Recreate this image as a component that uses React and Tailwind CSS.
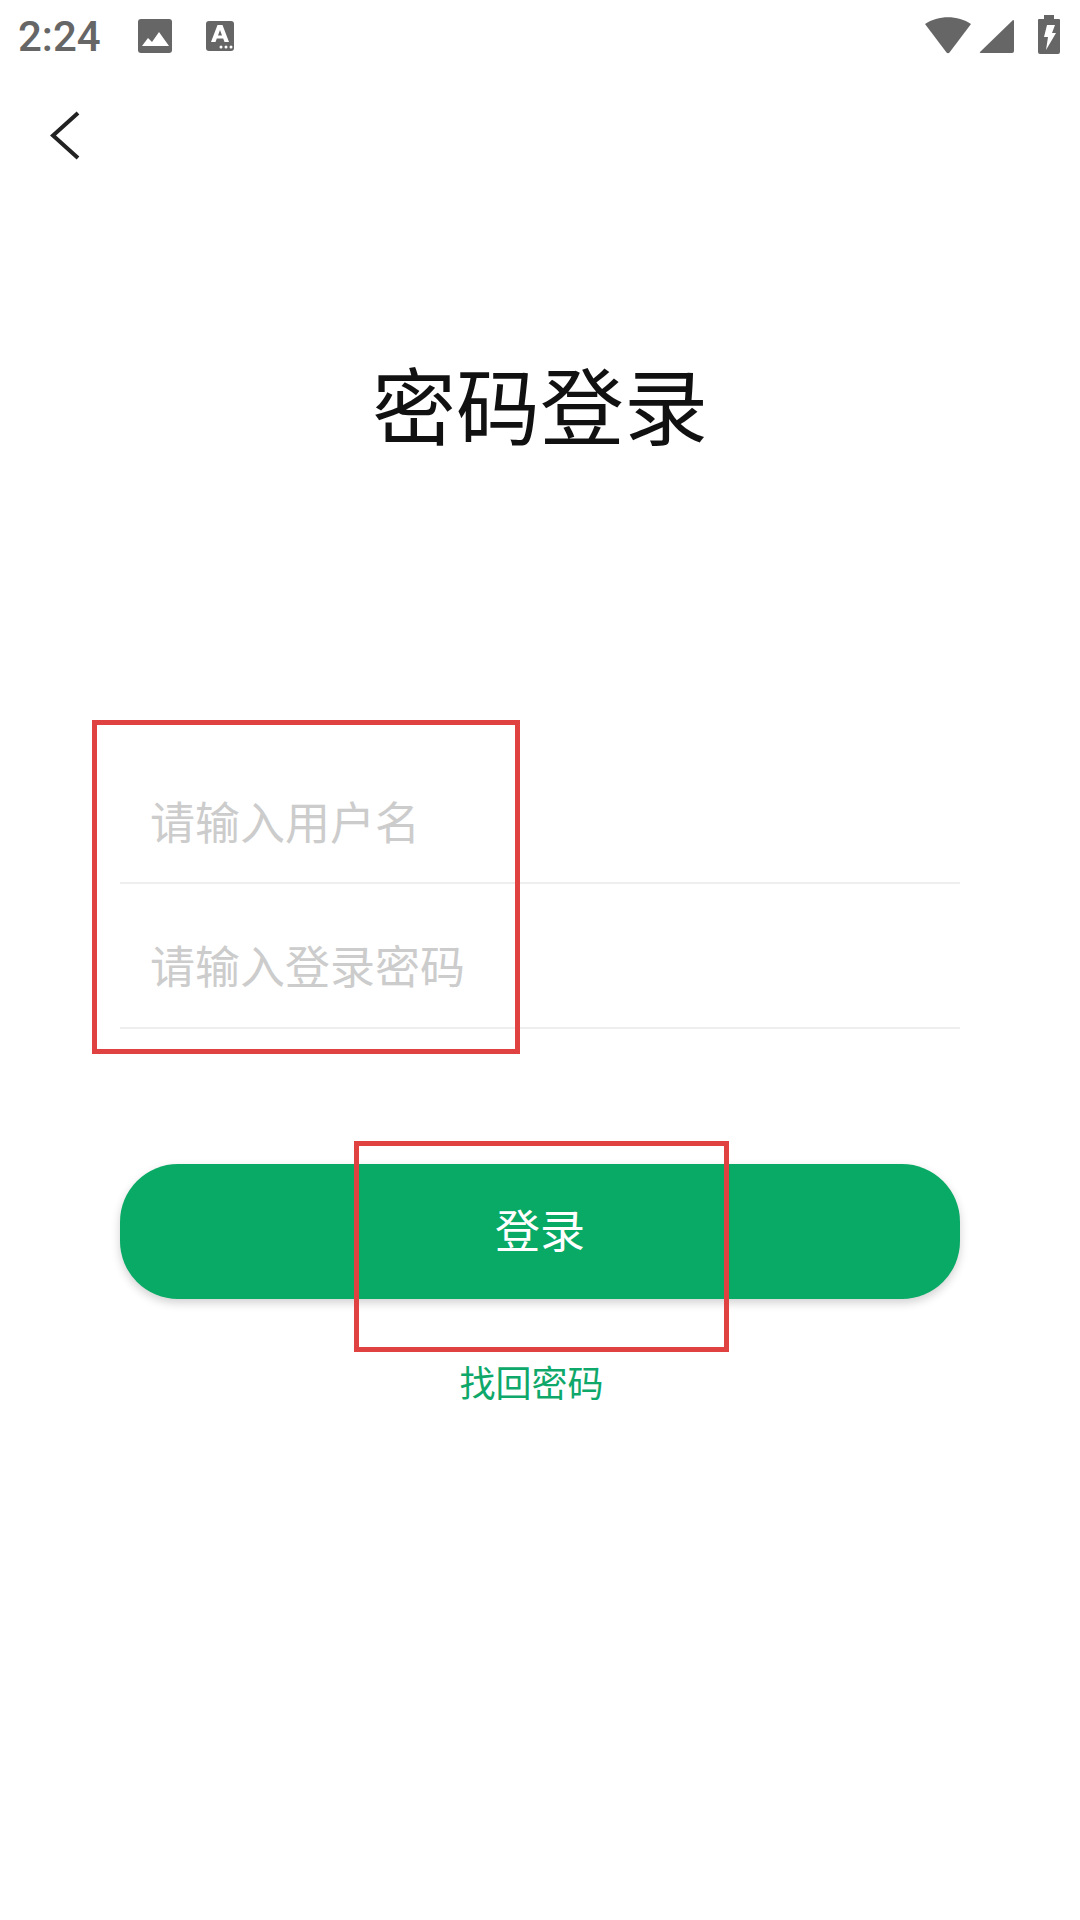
const cjk = "font-['Noto_Sans_CJK_SC','Noto_Sans',sans-serif]"

function StatusBar() {
  return (
    <div className="h-[72px] flex items-start text-[#666666]">
      <span className="ml-[18px] mt-[13px] text-[42px] leading-[48px] font-medium font-['Roboto',sans-serif]">2:24</span>
      {/* notification icons */}
      <svg className="ml-[36px] mt-[18px]" width="36" height="36" viewBox="0 0 36 36">
        <rect x="1" y="1" width="34" height="34" rx="3" fill="#666666" />
        <path d="M5 28 L11 20 L15 24 L22 14 L32 28 Z" fill="#fff" />
      </svg>
      <svg className="ml-[32px] mt-[20px]" width="30" height="32" viewBox="0 0 30 32">
        <rect x="1" y="1" width="28" height="30" rx="3" fill="#666666" />
        <path d="M6 22 L12.5 5 L17.5 5 L24 22 L19.5 22 L18.2 18.5 L11.8 18.5 L10.5 22 Z M13 15.5 L17 15.5 L15 10 Z" fill="#fff" fillRule="evenodd" />
        <circle cx="16" cy="27" r="1.5" fill="#fff" />
        <circle cx="21" cy="27" r="1.5" fill="#fff" />
        <circle cx="26" cy="27" r="1.5" fill="#fff" />
      </svg>
      <div className="ml-auto flex items-start">
        <svg className="mt-[16px]" width="48" height="38" viewBox="0 0 48 38">
          <path d="M1 8 C14 -1 34 -1 47 8 L25.5 36.5 Q24 38 22.5 36.5 Z" fill="#666666" />
        </svg>
        <svg className="ml-[7px] mt-[19px]" width="36" height="35" viewBox="0 0 36 35">
          <path d="M34 1 Q35 1 35 2 L35 32 Q35 34 33 34 L2 34 Q0 34 1 33 Z" fill="#666666" />
        </svg>
        <svg className="ml-[22px] mr-[19px] mt-[14px]" width="24" height="41" viewBox="0 0 24 41">
          <path d="M7 1 L17 1 L17 5 L22 5 Q23 5 23 6 L23 38 Q23 40 21 40 L3 40 Q1 40 1 38 L1 6 Q1 5 2 5 L7 5 Z" fill="#666666" />
          <path d="M10 11 L18 11 L15 19 L19 19 L9 36 L11 23 L7 23 Z" fill="#fff" />
        </svg>
      </div>
    </div>
  )
}

function Field({ placeholder, pb }) {
  return (
    <div className={`h-[145px] border-b-2 border-[#eeeeee] flex items-end pl-[30px] ${pb}`}>
      <span className="text-[45px] leading-[64px] text-[#cccccc]">{placeholder}</span>
    </div>
  )
}

export default function App() {
  return (
    <div className={`relative w-[1080px] h-[1920px] bg-white overflow-hidden ${cjk}`}>
      <StatusBar />

      {/* back */}
      <div className="pl-[50px] pt-[39px] h-[108px]">
        <svg width="30" height="49" viewBox="0 0 30 49" fill="none" stroke="#222222" strokeWidth="4">
          <path d="M28 2 L3 24.5 L28 47" />
        </svg>
      </div>

      <h1 className="mt-[163px] text-center text-[84px] leading-[120px] font-normal text-[#111111]">密码登录</h1>

      <div className="mt-[276px] mx-[120px]">
        <Field placeholder="请输入用户名" pb="pb-[29px]" />
        <Field placeholder="请输入登录密码" pb="pb-[30px]" />

        <button className="mt-[135px] w-full h-[135px] pb-[6px] rounded-[58px] bg-[#08aa66] text-white text-[45px] shadow-[0_4px_10px_rgba(0,0,0,0.18)]">
          登录
        </button>

        <div className="mt-[56px] pr-[17px] text-center text-[36px] leading-[52px] text-[#0ea86a]">找回密码</div>
      </div>

      {/* red annotation boxes drawn over the page */}
      <div className="absolute left-[92px] top-[720px] w-[428px] h-[334px] border-[5px] border-[#e04242]" />
      <div className="absolute left-[354px] top-[1141px] w-[375px] h-[211px] border-[5px] border-[#e04242]" />
    </div>
  )
}
